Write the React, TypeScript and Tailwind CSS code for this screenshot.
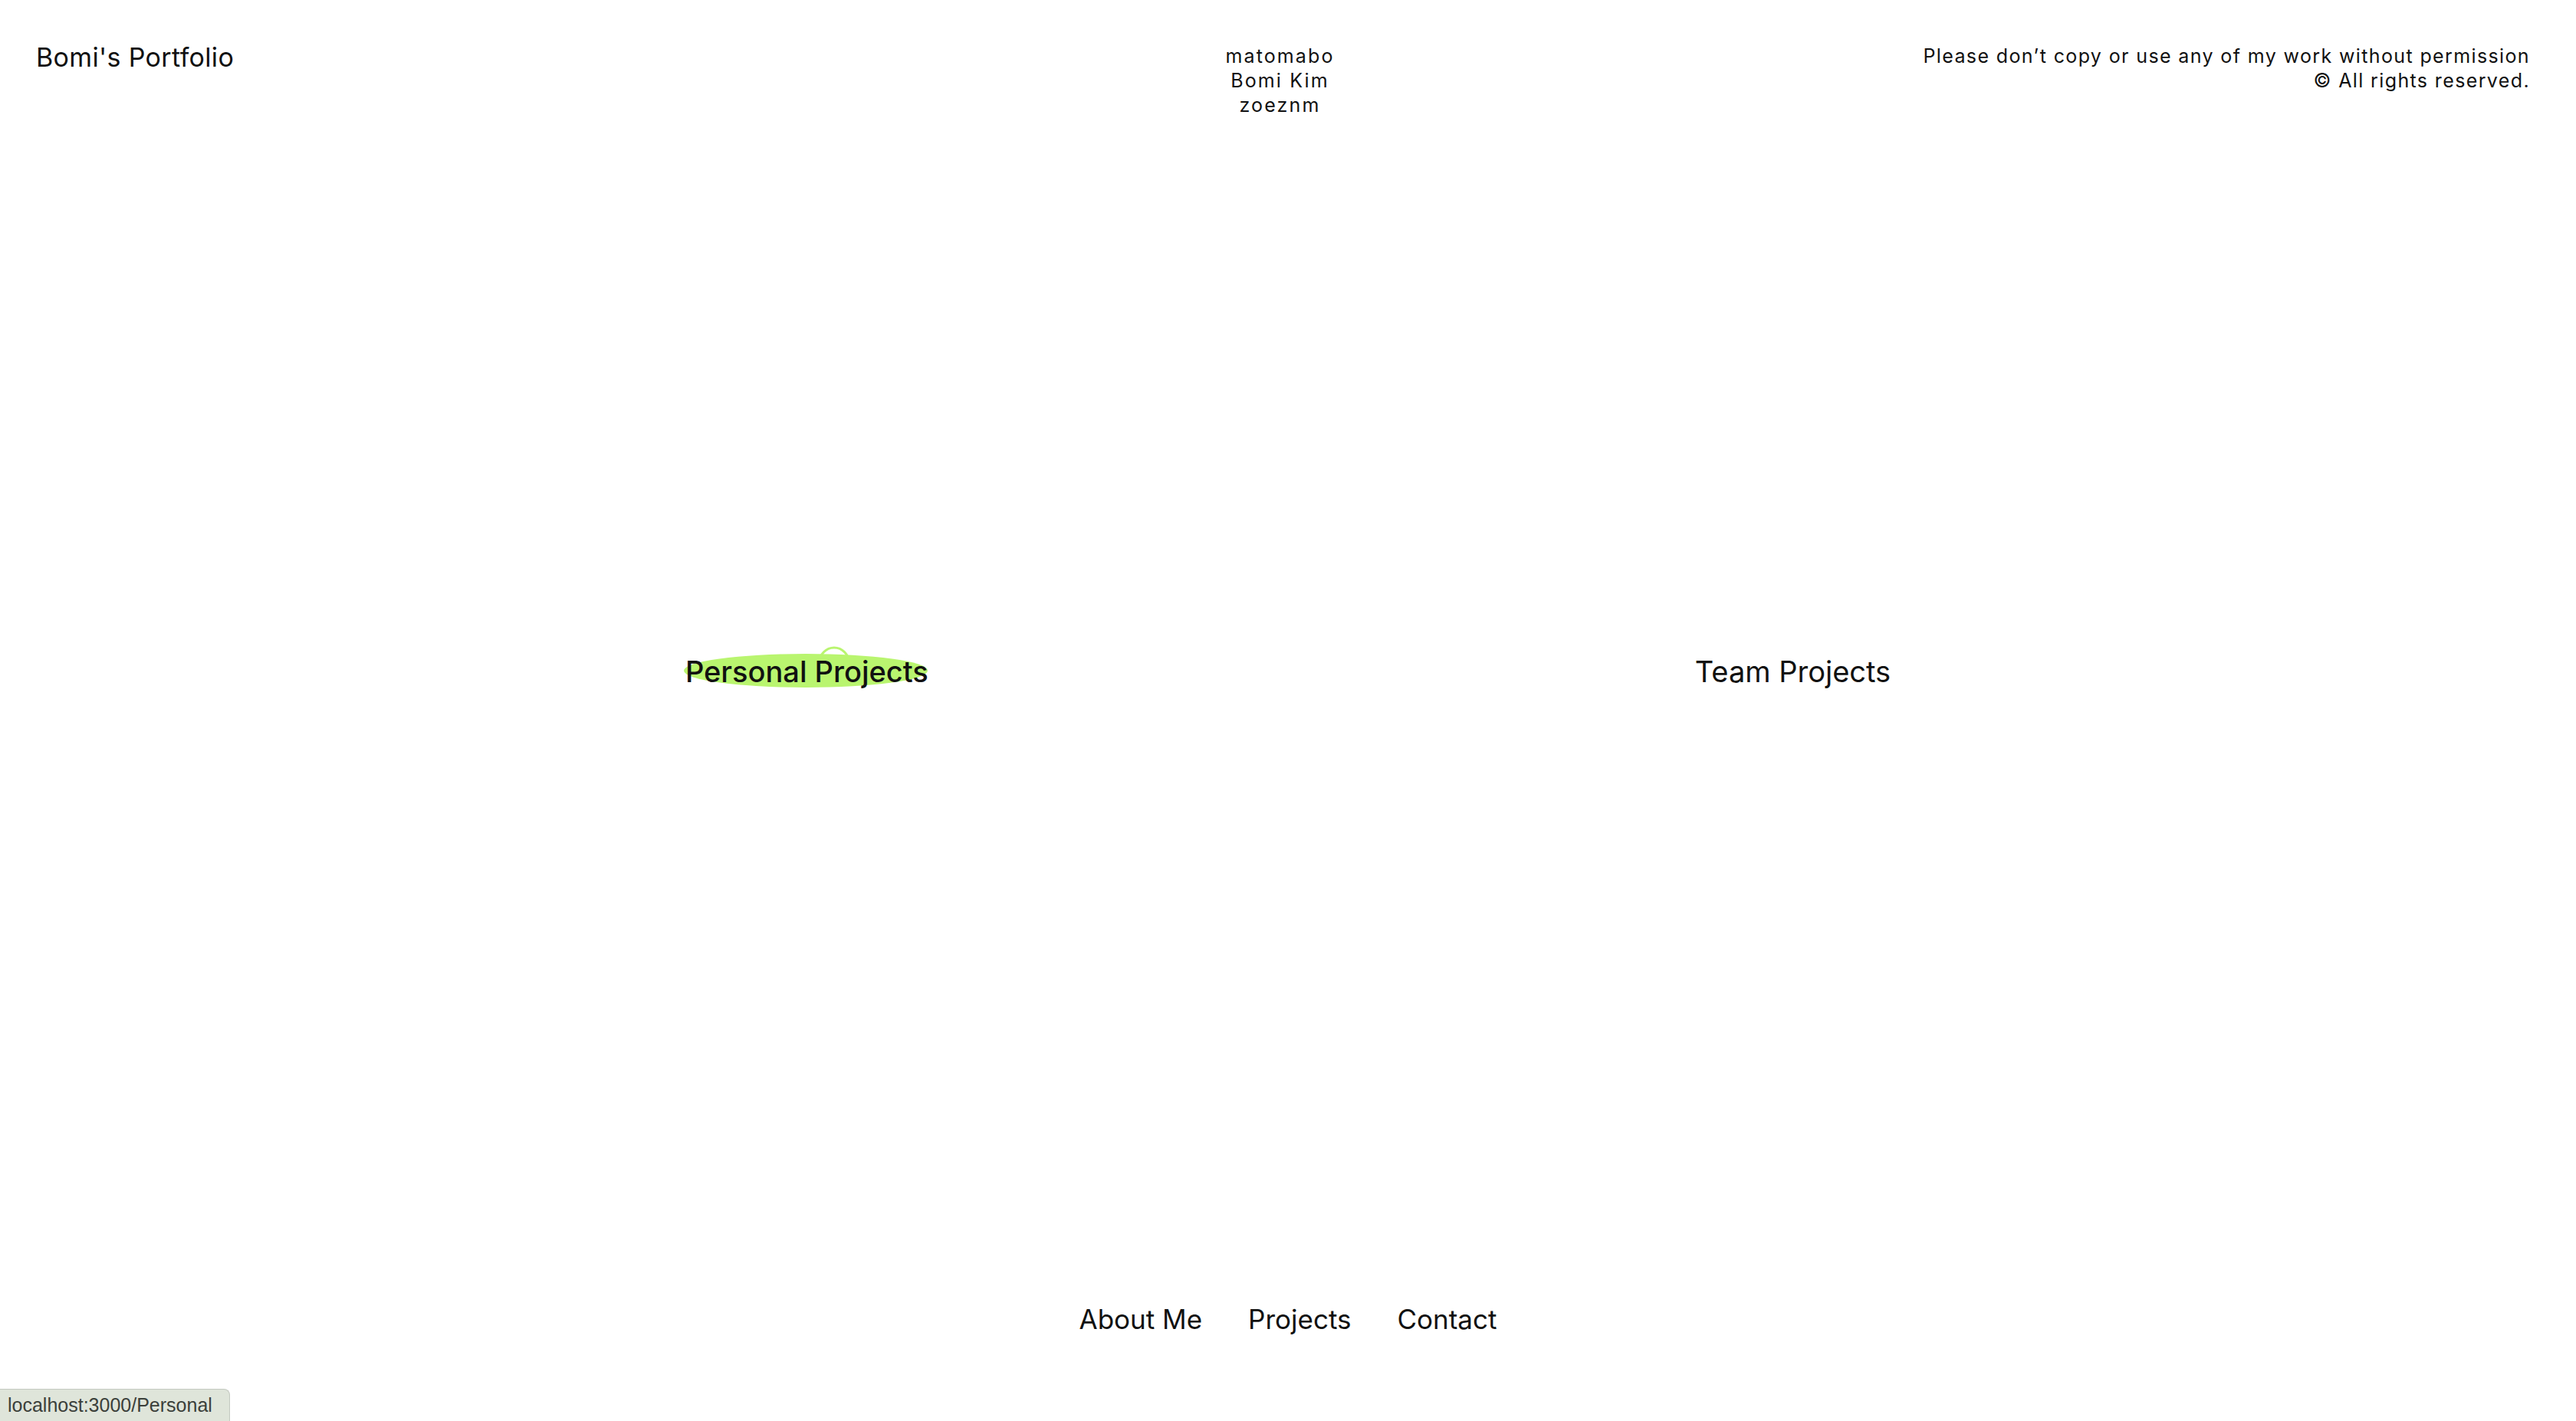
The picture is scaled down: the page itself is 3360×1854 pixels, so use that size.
export default function App() {
  return (
    <div className="relative h-screen w-full overflow-hidden bg-white text-[#111] font-[Inter,sans-serif]">
      <header className="grid grid-cols-3 items-start pl-[47px] pr-[60px] pt-[57px]">
        <div className="text-[34px] leading-[36px] tracking-[0.01em]">Bomi&apos;s Portfolio</div>
        <div className="pr-[8px] text-center text-[25px] leading-[32px] tracking-[0.085em]">
          <div>matomabo</div>
          <div>Bomi Kim</div>
          <div>zoeznm</div>
        </div>
        <div className="text-right text-[25px] leading-[32px] tracking-[0.055em]">
          <div>Please don’t copy or use any of my work without permission</div>
          <div>© All rights reserved.</div>
        </div>
      </header>

      <section className="mt-[699px] flex justify-center gap-[1000px] text-[38px] leading-[48px]">
        <a className="relative isolate cursor-pointer font-medium">
          <span className="absolute left-[-2px] top-[1px] -z-10 h-[44px] w-[318px] rounded-[50%] bg-[#b9f56f]" />
          <svg
            className="absolute left-[172px] top-[-10px] -z-10"
            width="44"
            height="44"
            viewBox="0 0 44 44"
          >
            <circle cx="22" cy="22" r="19" fill="none" stroke="#b9f56f" strokeWidth="3" />
          </svg>
          Personal Projects
        </a>
        <a className="cursor-pointer">Team Projects</a>
      </section>

      <nav className="mt-[797px] flex justify-center gap-[60px] text-[35px] leading-[48px]">
        <a className="cursor-pointer">About Me</a>
        <a className="cursor-pointer">Projects</a>
        <a className="cursor-pointer">Contact</a>
      </nav>

      <div className="fixed bottom-0 left-0 h-[42px] rounded-tr-[8px] border border-l-0 border-b-0 border-[#c3c9c0] bg-[#dfe5da] pl-[10px] pr-[22px] font-['Liberation_Sans',Arial,sans-serif] text-[25px] leading-[40px] text-[#3b403a]">
        localhost:3000/Personal
      </div>
    </div>
  );
}
